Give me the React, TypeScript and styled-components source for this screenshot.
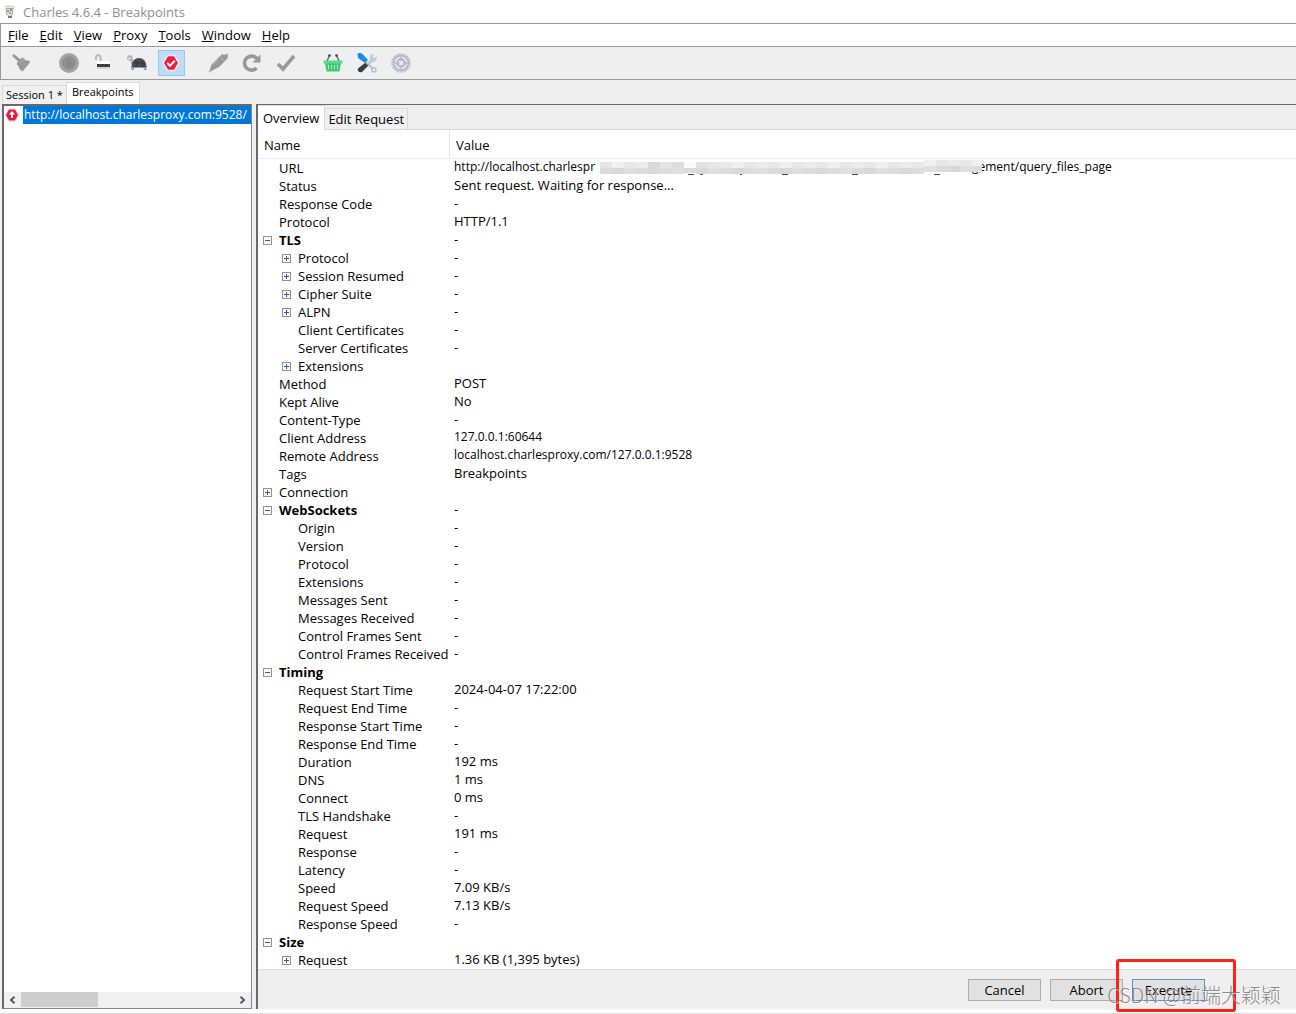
import React from "react";
import styled, { createGlobalStyle, css } from "styled-components";

const GlobalStyle = createGlobalStyle`
  *, *::before, *::after { box-sizing: border-box; }
  body { margin: 0; background: #fff; }
  button { font: inherit; color: inherit; margin: 0; padding: 0; border: 0; background: none; }
`;

const Window = styled.div`
  position: relative;
  display: flex;
  flex-direction: column;
  min-height: 100vh;
  overflow: hidden;
  font: 13px/18px "Open Sans", "Noto Sans CJK SC", sans-serif;
  color: #000;
`;

const TitleBar = styled.header`
  display: flex;
  align-items: center;
  gap: 7px;
  height: 23px;
  padding-left: 4px;
  color: #8f8f8f;
`;

const Title = styled.h1`
  margin: 0;
  font-size: 13px;
  font-weight: 400;
`;

const MenuBar = styled.nav`
  display: flex;
  align-items: center;
  gap: 11px;
  height: 23px;
  padding-left: 7px;
  border-top: 1px solid #999;
  border-left: 1px solid #999;
`;

const MenuButton = styled.button`
  &::first-letter { text-decoration: underline; }
`;

const Toolbar = styled.div`
  display: flex;
  align-items: center;
  height: 34px;
  padding-left: 7px;
  border-top: 1px solid #999;
  border-bottom: 1px solid #999;
  border-left: 1px solid #999;
  background: #efefef;
`;

const ToolButton = styled.button<{ $active?: boolean; $gap?: number }>`
  display: flex;
  align-items: center;
  justify-content: center;
  width: 27px;
  height: 26px;
  padding-right: 1px;
  margin-right: ${(p) => p.$gap ?? 7}px;
  ${(p) => p.$active && css`border: 1px solid #90c8f6; background: #c0dcf3;`}
`;

const SessionTabs = styled.div`
  display: flex;
  align-items: flex-end;
  height: 24px;
  padding-left: 2px;
  background: #efefef;
  font-size: 11px;
`;

const SessionTab = styled.button<{ $active?: boolean }>`
  height: ${(p) => (p.$active ? 22 : 19)}px;
  padding: 0 ${(p) => (p.$active ? 5 : 3)}px ${(p) => (p.$active ? 3 : 1)}px;
  border: 1px solid #d9d9d9;
  border-bottom: 0;
  border-right-width: ${(p) => (p.$active ? 1 : 0)}px;
  background: ${(p) => (p.$active ? "#fff" : "#f0f0f0")};
`;

const Main = styled.main`
  flex: 1;
  display: grid;
  grid-template-columns: 250px minmax(0, 1fr);
  gap: 4px;
  padding-left: 2px;
  background: #efefef;
`;

const Sidebar = styled.aside`
  display: flex;
  flex-direction: column;
  border: 1px solid #828790;
  border-top: 2px solid #696969;
  border-left: 2px solid #696969;
  background: #fff;
`;

const RequestList = styled.ul`
  flex: 1;
  margin: 0;
  padding: 0;
  list-style: none;
`;

const RequestItem = styled.li`
  display: flex;
  align-items: center;
  gap: 4px;
  height: 18px;
  padding-left: 1px;
`;

const RequestUrl = styled.span`
  flex: 1;
  overflow: hidden;
  padding-left: 1px;
  font-size: 12px;
  white-space: nowrap;
  background: #0078d7;
  color: #fff;
`;

const ScrollBar = styled.div`
  display: flex;
  height: 16px;
  background: #f0f0f0;
`;

const ScrollButton = styled.button`
  display: flex;
  align-items: center;
  justify-content: center;
  width: 17px;
`;

const ScrollTrack = styled.div`
  flex: 1;
`;

const ScrollThumb = styled.div`
  width: 36%;
  height: 15px;
  background: #cdcdcd;
`;

const Detail = styled.section`
  display: flex;
  flex-direction: column;
  border-top: 1px solid #696969;
  border-left: 2px solid #696969;
  background: #fff;
`;

const DetailTabs = styled.div`
  display: flex;
  align-items: flex-end;
  height: 25px;
  background: #efefef;
`;

const DetailTab = styled.button<{ $active?: boolean }>`
  height: ${(p) => (p.$active ? 25 : 22)}px;
  padding: 0 ${(p) => (p.$active ? 5 : 3)}px;
  white-space: nowrap;
  border-right: 1px solid #d9d9d9;
  border-top: 1px solid #d9d9d9;
  border-bottom: ${(p) => (p.$active ? 0 : 1)}px solid #d9d9d9;
  background: ${(p) => (p.$active ? "#fff" : "#f0f0f0")};
`;

const TabFill = styled.div`
  flex: 1;
  align-self: stretch;
  border-bottom: 1px solid #d9d9d9;
`;

const Scroller = styled.div`
  flex: 1;
`;

const Table = styled.table`
  width: 100%;
  border-collapse: separate;
  border-spacing: 0;
  table-layout: fixed;

  th {
    height: 29px;
    padding: 2px 6px 0;
    border-bottom: 1px solid #ececec;
    text-align: left;
    font-weight: 400;
  }
  th:first-child { width: 192px; border-right: 1px solid #e5e5e5; }
  td { height: 18px; padding: 0; white-space: nowrap; }
`;

const NameCell = styled.div<{ $level: number; $bold?: boolean }>`
  display: flex;
  align-items: center;
  gap: 7px;
  height: 18px;
  padding-left: ${(p) => 5 + p.$level * 19}px;
  font-weight: ${(p) => (p.$bold ? 700 : 400)};
`;

const Expander = styled.button`
  display: flex;
  width: 9px;
  height: 9px;
`;

const Blank = styled.span`
  width: 9px;
`;

const ValueCell = styled.div<{ $address?: boolean }>`
  display: flex;
  height: 18px;
  padding-left: 4px;
  font-size: ${(p) => (p.$address ? 12 : 13)}px;
  line-height: 16px;
`;

const UrlHead = styled.span`
  width: 146px;
`;

const Mosaic = styled.svg`
  flex: none;
  width: 382px;
  height: 16px;
  margin-right: -10px;
  z-index: 1;
`;

const Footer = styled.footer`
  display: flex;
  justify-content: flex-end;
  gap: 9px;
  height: 40px;
  padding: 9px 91px 0 0;
  border-top: 1px solid #dcdcdc;
  background: #efefef;
`;

const ActionButton = styled.button<{ $primary?: boolean }>`
  width: 73px;
  height: 22px;
  border: 1px solid ${(p) => (p.$primary ? "#5f93bd" : "#adadad")};
  background: #e1e1e1;
`;

const BottomEdge = styled.div`
  height: 5px;
  border-bottom: 1px solid #ddd;
`;

const Highlight = styled.div`
  position: absolute;
  right: 60px;
  bottom: 2px;
  width: 120px;
  height: 53px;
  border: 3px solid #fe2118;
  border-radius: 3px;
`;

const Watermark = styled.div`
  position: absolute;
  right: 15px;
  bottom: 5px;
  font: 300 20px/28px "Noto Sans CJK SC", sans-serif;
  color: rgba(125, 125, 125, 0.9);
  text-shadow: 1px 1px 0 rgba(255, 255, 255, 0.5);
  white-space: nowrap;
`;

const CharlesIcon = () => (
  <svg width="12" height="14" viewBox="0 0 12 14">
    <path d="M2 3.500 9 3.500 8.500 9 6 12.500 2.500 9Z" fill="#e4e7df" stroke="#a4aaa3" />
    <path d="M1 1.500 10 1.500" stroke="#d4d4d4" strokeWidth="2" />
    <path d="M3 5h2v2H3z" fill="#7ba57d" />
    <path d="M6 4h2v2H6z" fill="#b97e80" />
    <path d="M5 7h2v2H5z" fill="#a6a45f" />
    <path d="M4 11h4v2H4z" fill="#777" />
    <path d="M9 4l2-2" stroke="#ccc" />
  </svg>
);

const BroomIcon = () => (
  <svg width="20" height="20" viewBox="0 0 20 20" fill="#999">
    <path d="M1 2.800 2.800 1 9 6 12 4.500 14 7 19 8 18.500 10 11.500 18.500 8.500 16 7 12.500 5.500 11 7 8.500Z" />
    <path d="m8 10.500 5.500-5" stroke="#aeaeae" strokeWidth="1" />
  </svg>
);

const RecordIcon = () => (
  <svg width="20" height="20" viewBox="0 0 20 20">
    <circle cx="10" cy="10" r="10" fill="#a3a3a3" />
    <circle cx="10" cy="10" r="6.200" fill="#919191" stroke="#868686" />
    <circle cx="10" cy="10" r="4" fill="#8a8a8a" />
  </svg>
);

const LockIcon = () => (
  <svg width="20" height="20" viewBox="0 0 20 20">
    <path d="M3 7V4.500a2.300 2.300 0 0 1 4.600 0V8" fill="none" stroke="#b4b8c6" strokeWidth="2" />
    <rect x="4" y="8" width="13" height="8" rx="1" fill="#d0d3da" />
    <rect x="4" y="8" width="13" height="3" fill="#fff" />
    <rect x="4" y="11" width="13" height="3" fill="#32353b" />
    <path d="M6 14l2-3M10 14l2-3M14 14l2-3" stroke="#555961" />
  </svg>
);

const TurtleIcon = () => (
  <svg width="22" height="18" viewBox="0 0 22 18">
    <path d="M1.500 5.500a2.800 2.800 0 1 1 5-.5l2 4-1 3-2.500-2-.5-3Z" fill="#a9b1bd" />
    <circle cx="3.500" cy="4.500" r="1" fill="#fff" />
    <path d="M6 12 5 16h3l1-3M17 12l1 4h3l-2-4" fill="#9ca5b3" />
    <path d="M5.500 12.500q1-8.500 7.500-8.500t7.500 8.500v1H5.500Z" fill="#484a50" />
    <path d="M9 6l2 3-1 4M11 9h5l2-3M16 9l1 4M7 9l4 0M16 9l3 1" fill="none" stroke="#303238" strokeWidth=".8" />
    <path d="M5 13.500h16" stroke="#8d95a2" />
  </svg>
);

const BreakpointIcon = () => (
  <svg width="18" height="18" viewBox="0 0 18 18">
    <path d="M5 1h8l4.500 8L13 17H5L.5 9Z" fill="#fff" stroke="#d9dde2" />
    <path d="M6 2.300h6L16 9 12 15.700H6L2 9Z" fill="#f5183f" />
    <path d="m5.300 9 2.700 2.700 4.800-5" fill="none" stroke="#fff" strokeWidth="2" />
  </svg>
);

const PenIcon = () => (
  <svg width="21" height="20" viewBox="0 0 21 20">
    <path d="M1 19.500 3.500 11.500 12 3l2.500-2L16 2l4-1.500-.5 5L11 14l-5 2.500Z" fill="#999" />
    <path d="m12 3.500 4.500 4.500M5 11.500l5-5.500" stroke="#bcbcbc" fill="none" />
  </svg>
);

const RepeatIcon = () => (
  <svg width="20" height="20" viewBox="0 0 20 20">
    <path d="M14.500 15A7 7 0 1 1 14 4.700L15.500 6" fill="none" stroke="#999" strokeWidth="3.600" />
    <path d="M18.500 1.500v8h-8Z" fill="#999" />
  </svg>
);

const TickIcon = () => (
  <svg width="20" height="18" viewBox="0 0 20 18">
    <path d="m2 10 5 5L18 2" fill="none" stroke="#999" strokeWidth="3.600" />
  </svg>
);

const BasketIcon = () => (
  <svg width="20" height="20" viewBox="0 0 20 20">
    <path d="M3.500 9 6.500 2.500M16.500 9 13.500 2.500" stroke="#686b72" strokeWidth="1.500" />
    <circle cx="6.500" cy="2.500" r="1.300" fill="#444" />
    <circle cx="13.500" cy="2.500" r="1.300" fill="#444" />
    <path d="M2 10h16L16.500 18.500h-13Z" fill="#42ca73" />
    <path d="M.5 7.500h19v3H.5Z" fill="#59dc88" />
    <path d="M5.500 12v4M8.500 12v4M11.500 12v4M14.500 12v4" stroke="#b3edc6" />
  </svg>
);

const ToolsIcon = () => (
  <svg width="20" height="20" viewBox="0 0 20 20">
    <path d="m9 11 4-4q-1-4 2-6l2-.5-1.500 3L17 5l3-1.500q0 5-5 6L11 13Z" fill="#c6cad6" />
    <path d="m8.500 9.500 3 3-6.500 6.500q-2 1-4-1-.8-1.500.5-3Z" fill="#3b3d44" />
    <path d="M.5.500q3-1 5 .5l5.500 6-3 3L1 5Z" fill="#168ee6" />
    <path d="m9 9 7 7" stroke="#b8bdcb" strokeWidth="2" />
    <circle cx="17" cy="17" r="2" fill="none" stroke="#b8bdcb" strokeWidth="1.500" />
  </svg>
);

const GearIcon = () => (
  <svg width="20" height="20" viewBox="0 0 20 20" fill="none">
    <circle cx="10" cy="10" r="9" stroke="#b6b9c8" strokeWidth="1.600" strokeDasharray="1.800 1.030" />
    <circle cx="10" cy="10" r="7.300" stroke="#b8bbc9" strokeWidth="2.200" />
    <circle cx="10" cy="10" r="4" fill="#d4d6df" stroke="#a9adbc" strokeWidth="1.500" />
    <path d="M10 4v4M10 12v4M4 10h4M12 10h4" stroke="#b8bbc9" strokeWidth="1.500" />
    <circle cx="10" cy="10" r="1.500" fill="#efefef" />
  </svg>
);

const UploadIcon = () => (
  <svg width="14" height="14" viewBox="0 0 14 14">
    <path d="M4 .5h6L13.500 7 10 13.500H4L.5 7Z" fill="#fff" stroke="#d9d9df" />
    <path d="M4 1.500h6L13 7l-3 5.500H4L1 7Z" fill="#e9183d" />
    <path d="M7 3 3.800 6.500H6V10h2V6.500h2.200Z" fill="#fff" />
  </svg>
);

const ExpandGlyph = ({ open }: { open: boolean }) => (
  <svg width="9" height="9" viewBox="0 0 9 9">
    <rect x=".5" y=".5" width="8" height="8" fill="#fafafa" stroke="#919191" />
    <path d={open ? "M2 4.500h5" : "M2 4.500h5M4.500 2v5"} stroke="#3b57a5" />
  </svg>
);

const Chevron = ({ right }: { right?: boolean }) => (
  <svg width="7" height="8" viewBox="0 0 7 8">
    <path d={right ? "m1.500 .7 3.500 3.300-3.500 3.300" : "M5.500.7 2 4l3.500 3.300"} fill="none" stroke="#555" strokeWidth="1.900" />
  </svg>
);

const topShades = ["#e6e6e6", "#f0f0f0", "#e8e8e8", "#ebebeb", "#d9d9d9", "#e5e5e5", "#dedede", "#fbfaf9", "#e1e1e1", "#e6e6e6", "#e9e9e9"];
const lowShades = ["#dbdbdb", "#dedede", "#dcdcdc", "#d8d8d8", "#e0e0e0", "#d9d9d9", "#dfdfdf"];

const HiddenPath = () => (
  <Mosaic viewBox="0 0 382 16" role="img" aria-label="Hidden part of the address">
    {Array.from({ length: 32 }, (_, i) => (
      <g key={i}>
        <rect x={i * 12} y={i > 26 ? 1 : 3} width="12" height="7" fill={i < 11 ? topShades[i] : topShades[(i * 3) % 4]} />
        <rect x={i * 12} y={i > 26 ? 7 : 9} width="12" height={i === 7 ? 5 : 6} fill={lowShades[(i * 3) % 7]} />
      </g>
    ))}
    {[88, 182, 252, 334].map((x) => (
      <path key={x} d={`M${x} 15.500h6`} stroke="#444" />
    ))}
    <path d="M100 15.500h3M140 15.500h2" stroke="#555" />
  </Mosaic>
);

type Row = { name: string; value?: string; level?: number; open?: boolean; bold?: boolean; address?: boolean };

const rows: Row[] = [
  { name: "URL", value: "url" },
  { name: "Status", value: "Sent request. Waiting for response..." },
  { name: "Response Code" },
  { name: "Protocol", value: "HTTP/1.1" },
  { name: "TLS", open: true, bold: true },
  { name: "Protocol", level: 1, open: false },
  { name: "Session Resumed", level: 1, open: false },
  { name: "Cipher Suite", level: 1, open: false },
  { name: "ALPN", level: 1, open: false },
  { name: "Client Certificates", level: 1 },
  { name: "Server Certificates", level: 1 },
  { name: "Extensions", level: 1, open: false, value: "" },
  { name: "Method", value: "POST" },
  { name: "Kept Alive", value: "No" },
  { name: "Content-Type" },
  { name: "Client Address", value: "127.0.0.1:60644", address: true },
  { name: "Remote Address", value: "localhost.charlesproxy.com/127.0.0.1:9528", address: true },
  { name: "Tags", value: "Breakpoints" },
  { name: "Connection", open: false, value: "" },
  { name: "WebSockets", open: true, bold: true },
  { name: "Origin", level: 1 },
  { name: "Version", level: 1 },
  { name: "Protocol", level: 1 },
  { name: "Extensions", level: 1 },
  { name: "Messages Sent", level: 1 },
  { name: "Messages Received", level: 1 },
  { name: "Control Frames Sent", level: 1 },
  { name: "Control Frames Received", level: 1 },
  { name: "Timing", open: true, bold: true, value: "" },
  { name: "Request Start Time", level: 1, value: "2024-04-07 17:22:00" },
  { name: "Request End Time", level: 1 },
  { name: "Response Start Time", level: 1 },
  { name: "Response End Time", level: 1 },
  { name: "Duration", level: 1, value: "192 ms" },
  { name: "DNS", level: 1, value: "1 ms" },
  { name: "Connect", level: 1, value: "0 ms" },
  { name: "TLS Handshake", level: 1 },
  { name: "Request", level: 1, value: "191 ms" },
  { name: "Response", level: 1 },
  { name: "Latency", level: 1 },
  { name: "Speed", level: 1, value: "7.09 KB/s" },
  { name: "Request Speed", level: 1, value: "7.13 KB/s" },
  { name: "Response Speed", level: 1 },
  { name: "Size", open: true, bold: true, value: "" },
  { name: "Request", level: 1, open: false, value: "1.36 KB (1,395 bytes)" },
];

const tools = [
  { label: "Clear session", icon: <BroomIcon />, gap: 21 },
  { label: "Record", icon: <RecordIcon /> },
  { label: "SSL proxying", icon: <LockIcon /> },
  { label: "Throttle", icon: <TurtleIcon /> },
  { label: "Breakpoints", icon: <BreakpointIcon />, active: true, gap: 20 },
  { label: "Compose", icon: <PenIcon /> },
  { label: "Repeat", icon: <RepeatIcon /> },
  { label: "Validate", icon: <TickIcon />, gap: 20 },
  { label: "Publish", icon: <BasketIcon /> },
  { label: "Tools", icon: <ToolsIcon /> },
  { label: "Settings", icon: <GearIcon /> },
];

export default function App() {
  return (
    <Window>
      <GlobalStyle />
      <TitleBar>
        <CharlesIcon />
        <Title>Charles 4.6.4 - Breakpoints</Title>
      </TitleBar>
      <MenuBar>
        {["File", "Edit", "View", "Proxy", "Tools", "Window", "Help"].map((m) => (
          <MenuButton key={m}>{m}</MenuButton>
        ))}
      </MenuBar>
      <Toolbar>
        {tools.map((t) => (
          <ToolButton key={t.label} aria-label={t.label} $active={t.active} $gap={t.gap}>
            {t.icon}
          </ToolButton>
        ))}
      </Toolbar>
      <SessionTabs>
        <SessionTab>Session 1 *</SessionTab>
        <SessionTab $active>Breakpoints</SessionTab>
      </SessionTabs>
      <Main>
        <Sidebar>
          <RequestList>
            <RequestItem>
              <UploadIcon />
              <RequestUrl>http://localhost.charlesproxy.com:9528/</RequestUrl>
            </RequestItem>
          </RequestList>
          <ScrollBar>
            <ScrollButton aria-label="Scroll left"><Chevron /></ScrollButton>
            <ScrollTrack><ScrollThumb /></ScrollTrack>
            <ScrollButton aria-label="Scroll right"><Chevron right /></ScrollButton>
          </ScrollBar>
        </Sidebar>
        <Detail>
          <DetailTabs>
            <DetailTab $active>Overview</DetailTab>
            <DetailTab>Edit Request</DetailTab>
            <TabFill />
          </DetailTabs>
          <Scroller>
            <Table>
              <thead>
                <tr><th>Name</th><th>Value</th></tr>
              </thead>
              <tbody>
                {rows.map((r, i) => (
                  <tr key={i}>
                    <td>
                      <NameCell $level={r.level ?? 0} $bold={r.bold}>
                        {r.open === undefined ? <Blank /> : (
                          <Expander aria-label={`Toggle ${r.name}`} aria-expanded={r.open}>
                            <ExpandGlyph open={r.open} />
                          </Expander>
                        )}
                        {r.name}
                      </NameCell>
                    </td>
                    <td>
                      {r.value === "url" ? (
                        <ValueCell $address>
                          <UrlHead>http://localhost.charlespr</UrlHead>
                          <HiddenPath />
                          <span>gement/query_files_page</span>
                        </ValueCell>
                      ) : (
                        <ValueCell $address={r.address}>{r.value ?? "-"}</ValueCell>
                      )}
                    </td>
                  </tr>
                ))}
              </tbody>
            </Table>
          </Scroller>
          <Footer>
            <ActionButton>Cancel</ActionButton>
            <ActionButton>Abort</ActionButton>
            <ActionButton $primary>Execute</ActionButton>
          </Footer>
        </Detail>
      </Main>
      <BottomEdge />
      <Highlight />
      <Watermark>CSDN @前端大颖颖</Watermark>
    </Window>
  );
}
